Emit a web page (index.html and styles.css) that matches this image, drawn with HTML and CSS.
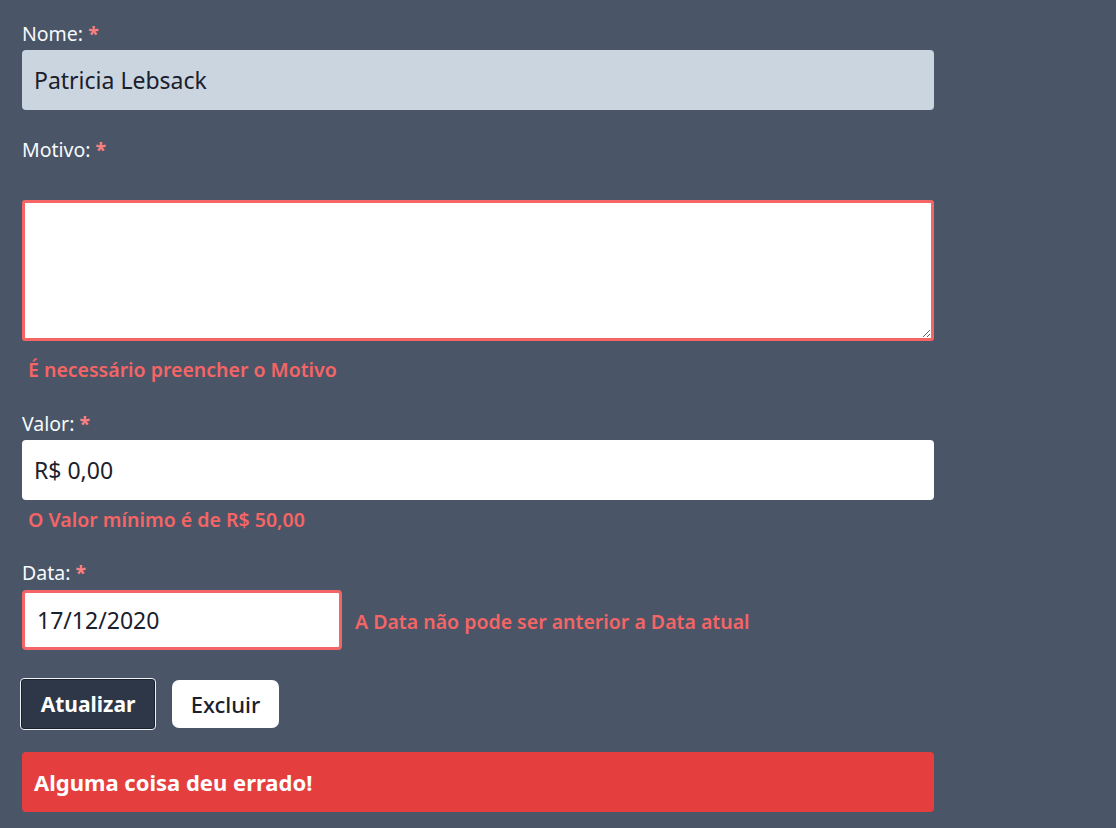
FILE: index.html
```html
<!DOCTYPE html>
<html lang="pt-BR">
<head>
<meta charset="utf-8">
<title>Formulário</title>
<link rel="stylesheet" href="styles.css">
</head>
<body>
<form class="form">
  <div class="field field-nome">
    <label class="label">Nome: <span class="req">*</span></label>
    <input class="input input-readonly" type="text" value="Patricia Lebsack" readonly>
  </div>
  <div class="field field-motivo">
    <label class="label">Motivo: <span class="req">*</span></label>
    <textarea class="textarea is-invalid"></textarea>
    <p class="error">É necessário preencher o Motivo</p>
  </div>
  <div class="field field-valor">
    <label class="label">Valor: <span class="req">*</span></label>
    <input class="input" type="text" value="R$ 0,00">
    <p class="error error-tight">O Valor mínimo é de R$ 50,00</p>
  </div>
  <div class="field field-data">
    <label class="label">Data: <span class="req">*</span></label>
    <div class="row">
      <input class="input input-date is-invalid" type="text" value="17/12/2020">
      <p class="error error-inline">A Data não pode ser anterior a Data atual</p>
    </div>
  </div>
  <div class="actions">
    <button type="button" class="btn btn-primary">Atualizar</button>
    <button type="button" class="btn btn-light">Excluir</button>
  </div>
  <div class="alert">Alguma coisa deu errado!</div>
</form>
</body>
</html>
```
FILE: styles.css
```css
html, body {
  margin: 0;
  padding: 0;
  background: #4a5568;
  height: 100%;
}
body {
  font-family: "Noto Sans", "Open Sans", sans-serif;
  color: #f7fafc;
}
.form {
  width: 912px;
  padding: 22px 0 0 22px;
  display: flex;
  flex-direction: column;
}
.field {
  display: flex;
  flex-direction: column;
}
.label {
  font-size: 19.5px;
  line-height: 24px;
  height: 24px;
  color: #f7fafc;
}
.req {
  color: #fc8181;
  font-weight: 700;
}
.input {
  box-sizing: border-box;
  height: 60px;
  width: 100%;
  margin: 4px 0 0;
  padding: 0 12px;
  border: 0;
  border-radius: 4px;
  background: #ffffff;
  font-family: inherit;
  font-size: 23px;
  color: #1a202c;
  outline: none;
}
.input-readonly {
  background: #cbd5e0;
}
.field-motivo {
  margin-top: 28px;
}
.textarea {
  box-sizing: border-box;
  display: block;
  width: 100%;
  height: 141px;
  margin: 38px 0 0;
  border: 3px solid #f56565;
  border-radius: 3px;
  background: #fff;
  font-family: inherit;
  font-size: 20px;
  resize: vertical;
  outline: none;
}
.error {
  margin: 17px 0 0 6px;
  font-size: 19.5px;
  line-height: 24px;
  font-weight: 600;
  color: #f56565;
}
.error-tight {
  margin-top: 8px;
}
.field-valor {
  margin-top: 30px;
}
.input.is-invalid {
  border: 3px solid #f56565;
}
.field-data {
  margin-top: 29px;
}
.row {
  display: flex;
  align-items: center;
  margin-top: 5px;
}
.input-date {
  width: 320px;
  margin: 0;
}
.error-inline {
  margin: 4px 0 0 13px;
}
.actions {
  display: flex;
  align-items: center;
  gap: 16px;
  margin: 28px 0 0 -2px;
}
.btn {
  font-family: inherit;
  cursor: pointer;
  padding: 0;
}
.btn-primary {
  height: 52px;
  width: 136px;
  background: #2d3748;
  color: #fff;
  font-size: 21px;
  font-weight: 700;
  border: 1px solid #edf2f7;
  border-radius: 4px;
  box-shadow: inset 0 0 0 1px #1a202c;
}
.btn-light {
  height: 48px;
  width: 107px;
  background: #fff;
  color: #1a202c;
  font-size: 22px;
  font-weight: 500;
  border: 0;
  border-radius: 7px;
}
.alert {
  box-sizing: border-box;
  height: 60px;
  margin-top: 22px;
  padding: 0 12px;
  display: flex;
  align-items: center;
  background: #e53e3e;
  border-radius: 4px;
  color: #fff;
  font-size: 22px;
  font-weight: 700;
}
```
